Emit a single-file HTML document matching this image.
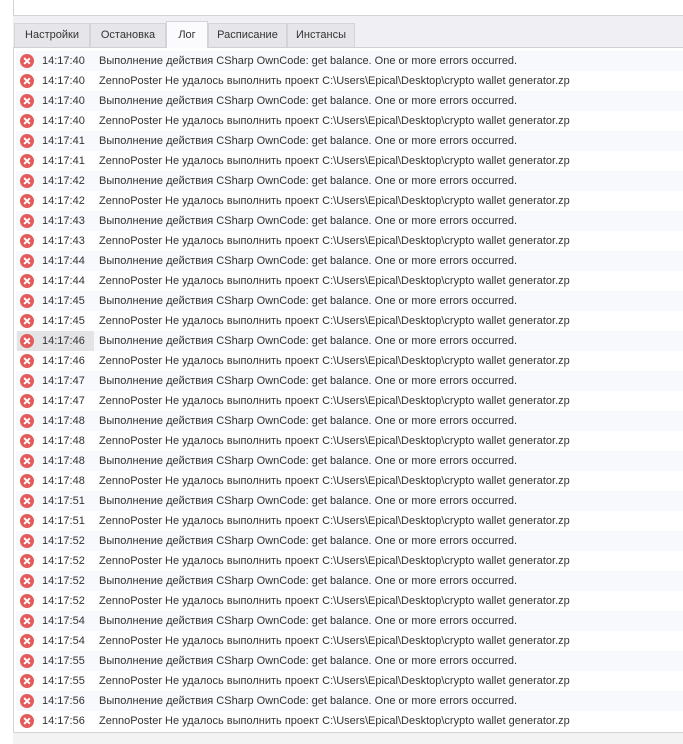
<!DOCTYPE html>
<html><head><meta charset="utf-8"><style>
*{margin:0;padding:0;box-sizing:border-box}
body{width:683px;height:744px;background:#f3f3f3;font-family:"Liberation Sans",sans-serif;font-size:11px;color:#333;position:relative;overflow:hidden}
.top{position:absolute;left:13px;top:-1px;width:680px;height:17px;background:#fff;border:1px solid #d4d4d8}
.strip{position:absolute;left:13px;top:16px;width:670px;height:32px;background:#f0f0f4;border-bottom:1px solid #d0d0d4}
.tab{position:absolute;top:7px;height:24px;background:#e6e6ea;border:1px solid #d4d4d8;border-bottom:none;text-align:center;line-height:22px;color:#333}
.tab.a{top:5px;height:27px;background:#fbfbfd;line-height:26px}
.panel{position:absolute;left:13px;top:48px;width:680px;height:685px;background:#fff;border-left:1px solid #d4d4d8;border-bottom:1px solid #d4d4d8}
.row{position:absolute;left:2px;width:680px;height:20px;line-height:20px}
.row.o{background:#f8f9fc}
.ic{position:absolute;left:4px;top:3px;width:14px;height:14px;border-radius:50%;background:#e35b5b}
.ic:before,.ic:after{content:"";position:absolute;left:6.2px;top:3px;width:1.7px;height:8px;background:#fff;transform:rotate(45deg)}
.ic:after{transform:rotate(-45deg)}
.t{position:absolute;left:26px}
.hl{position:absolute;left:1px;top:0;width:77px;height:20px;background:#e4e4e6}
.m{position:absolute;left:83px;white-space:nowrap}
.lefts{position:absolute;left:0;top:0;width:13px;height:744px;background:#fff}
</style></head><body>
<div class="lefts"></div>
<div class="top"></div>
<div class="strip">
<div class="tab" style="left:1px;width:76px">Настройки</div>
<div class="tab" style="left:77px;width:76px">Остановка</div>
<div class="tab a" style="left:153px;width:42px">Лог</div>
<div class="tab" style="left:195px;width:79px">Расписание</div>
<div class="tab" style="left:274px;width:68px">Инстансы</div>
</div>
<div class="panel" id="p"></div>
<script>
var times=["14:17:40","14:17:40","14:17:40","14:17:40","14:17:41","14:17:41","14:17:42","14:17:42","14:17:43","14:17:43","14:17:44","14:17:44","14:17:45","14:17:45","14:17:46","14:17:46","14:17:47","14:17:47","14:17:48","14:17:48","14:17:48","14:17:48","14:17:51","14:17:51","14:17:52","14:17:52","14:17:52","14:17:52","14:17:54","14:17:54","14:17:55","14:17:55","14:17:56","14:17:56"];
var a="Выполнение действия CSharp OwnCode: get balance. One or more errors occurred.";
var b="ZennoPoster Не удалось выполнить проект C:\\Users\\Epical\\Desktop\\crypto wallet generator.zp";
var h="";
for(var i=0;i<times.length;i++){
h+='<div class="row'+(i%2==0?' o':'')+'" style="top:'+(3+i*20)+'px">'+(i==14?'<div class="hl"></div>':'')+'<div class="ic"></div><div class="t">'+times[i]+'</div><div class="m">'+(i%2==0?a:b)+'</div></div>';
}
document.getElementById("p").innerHTML=h;
</script>
</body></html>
